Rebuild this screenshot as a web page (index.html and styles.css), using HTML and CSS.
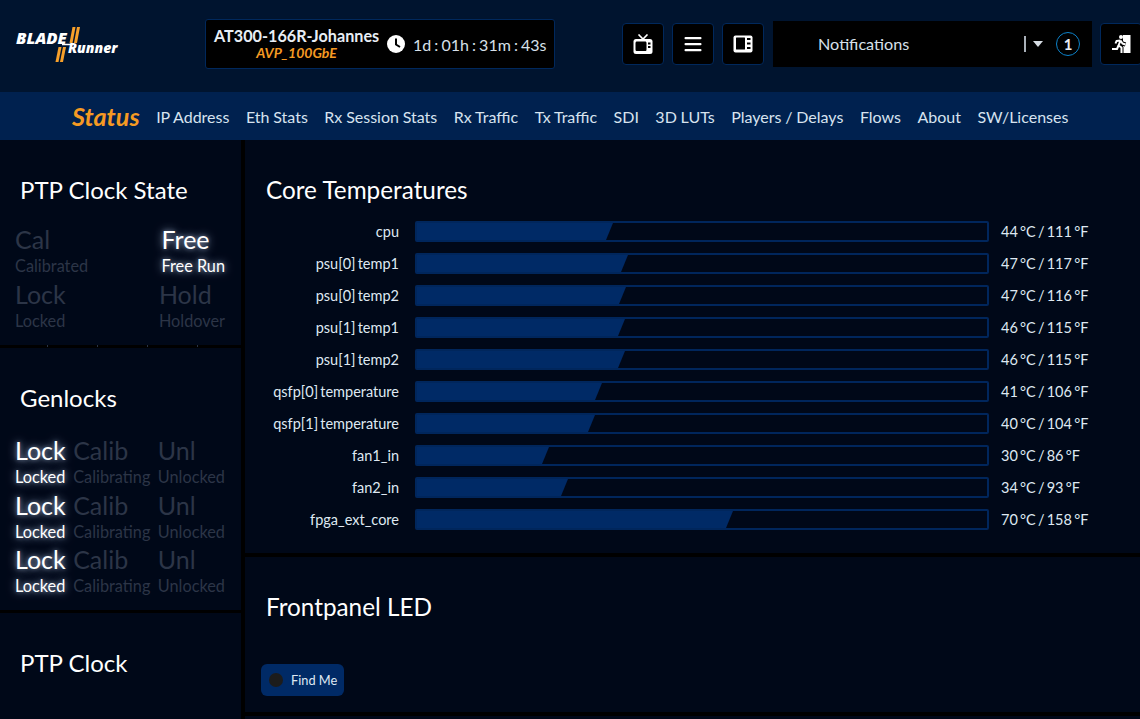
FILE: index.html
```html
<!DOCTYPE html>
<html lang="en">
<head>
<meta charset="utf-8">
<title>BladeRunner Status</title>
<link rel="stylesheet" href="styles.css">
</head>
<body>
<div class="page">
  <header class="top">
    <svg class="logo" width="104" height="40" viewBox="0 0 104 40">
      <text class="logo-blade" x="1" y="20">BLADE</text>
      <path class="logo-bar" d="M47 20.500h9"/>
      <g fill="#f7a02a">
        <polygon points="57.500,3 60.500,3 57.500,19 54.500,19"/>
        <polygon points="62,3 65,3 62,19 59,19"/>
        <polygon points="43.500,23 46.500,23 43.500,38 40.500,38"/>
        <polygon points="48,23 51,23 48,38 45,38"/>
      </g>
      <text class="logo-runner" x="53" y="29">Runner</text>
    </svg>
    <div class="device">
      <div class="device-name">
        <div class="device-title">AT300-166R-Johannes</div>
        <div class="device-sub">AVP_100GbE</div>
      </div>
      <svg class="clock" width="18" height="18" viewBox="0 0 18 18">
        <circle cx="9" cy="9" r="9" fill="#fff"/>
        <path d="M9 3.500v6l4 2.500" fill="none" stroke="#000" stroke-width="2"/>
      </svg>
      <div class="uptime">1d : 01h : 31m : 43s</div>
    </div>
    <button class="icon-btn first" aria-label="Monitor">
      <svg width="20" height="20" viewBox="0 0 20 20">
        <rect x="0.500" y="5" width="19" height="15" rx="2.500" fill="#fff"/>
        <path d="M5.500 0.500L10 5l4.500-4.500" fill="none" stroke="#fff" stroke-width="1.600"/>
        <path d="M4 7.500h8c1 0 1.500.6 1.500 1.500v6.500c0 1-.5 1.500-1.500 1.500H4c-1 0-1.500-.5-1.500-1.500V9c0-.9.500-1.500 1.500-1.500z" fill="#000"/>
        <rect x="15" y="8.500" width="2.500" height="2" fill="#000"/>
        <rect x="15" y="12" width="2.500" height="2" fill="#000"/>
      </svg>
    </button>
    <button class="icon-btn" aria-label="Menu">
      <svg width="18" height="16" viewBox="0 0 18 16" fill="#fff">
        <rect x="0.500" y="1" width="17" height="2.200" rx="1"/>
        <rect x="0.500" y="7" width="17" height="2.200" rx="1"/>
        <rect x="0.500" y="13" width="17" height="2.200" rx="1"/>
      </svg>
    </button>
    <button class="icon-btn" aria-label="Panel">
      <svg width="20" height="18" viewBox="0 0 20 18">
        <rect x="0.500" y="0.500" width="19" height="17" rx="2" fill="#fff"/>
        <rect x="3" y="2.500" width="9" height="12" rx="0.500" fill="#000"/>
        <rect x="14" y="3" width="3.500" height="2" fill="#000"/>
        <rect x="14" y="7.500" width="3.500" height="2" fill="#000"/>
        <rect x="14" y="12" width="3.500" height="2" fill="#000"/>
      </svg>
    </button>
    <div class="notify">
      <span class="notify-label">Notifications</span>
      <span class="notify-sep"></span>
      <span class="notify-caret"></span>
      <span class="notify-count">1</span>
    </div>
    <button class="icon-btn exit" aria-label="Exit">
      <svg width="20" height="20" viewBox="0 0 20 20">
        <rect x="12" y="1" width="7.500" height="18" fill="#fff"/>
        <g fill="none" stroke-linejoin="round">
          <path d="M9.500 6.500L7.500 11.500M9.500 6.500L5.500 7 4.500 9.500M9.500 6.500L11.500 9.500 14.500 10.500M7.500 11.500L10.500 13.500 10.500 19M7.500 11.500L6 15 1 15" stroke="#000" stroke-width="4"/>
          <path d="M9.500 6.500L7.500 11.500M9.500 6.500L5.500 7 4.500 9.500M9.500 6.500L11.500 9.500 14.500 10.500M7.500 11.500L10.500 13.500 10.500 19M7.500 11.500L6 15 1 15" stroke="#fff" stroke-width="2"/>
        </g>
        <circle cx="10" cy="3" r="2" fill="#fff"/>
      </svg>
    </button>
  </header>

  <nav class="tabs">
    <a class="tab active">Status</a>
    <a class="tab">IP Address</a>
    <a class="tab">Eth Stats</a>
    <a class="tab">Rx Session Stats</a>
    <a class="tab">Rx Traffic</a>
    <a class="tab">Tx Traffic</a>
    <a class="tab">SDI</a>
    <a class="tab">3D LUTs</a>
    <a class="tab">Players / Delays</a>
    <a class="tab">Flows</a>
    <a class="tab">About</a>
    <a class="tab">SW/Licenses</a>
  </nav>

  <main class="content">
    <aside class="left">
      <section class="panel ptp-state">
        <h2 class="title side-title">PTP Clock State</h2>
        <div class="state-row">
          <div class="state"><div class="big">Cal</div><div class="small">Calibrated</div></div>
          <div class="state on"><div class="big">Free</div><div class="small">Free Run</div></div>
        </div>
        <div class="state-row">
          <div class="state"><div class="big">Lock</div><div class="small">Locked</div></div>
          <div class="state"><div class="big">Hold</div><div class="small">Holdover</div></div>
        </div>
      </section>
      <div class="gap-ticks"><i></i><i></i><i></i><i></i></div>
      <section class="panel genlocks">
        <h2 class="title side-title">Genlocks</h2>
        <div class="state-row">
          <div class="state on"><div class="big">Lock</div><div class="small">Locked</div></div>
          <div class="state"><div class="big">Calib</div><div class="small">Calibrating</div></div>
          <div class="state"><div class="big">Unl</div><div class="small">Unlocked</div></div>
        </div>
        <div class="state-row">
          <div class="state on"><div class="big">Lock</div><div class="small">Locked</div></div>
          <div class="state"><div class="big">Calib</div><div class="small">Calibrating</div></div>
          <div class="state"><div class="big">Unl</div><div class="small">Unlocked</div></div>
        </div>
        <div class="state-row">
          <div class="state on"><div class="big">Lock</div><div class="small">Locked</div></div>
          <div class="state"><div class="big">Calib</div><div class="small">Calibrating</div></div>
          <div class="state"><div class="big">Unl</div><div class="small">Unlocked</div></div>
        </div>
      </section>
      <section class="panel ptp-clock">
        <h2 class="title side-title">PTP Clock</h2>
      </section>
    </aside>

    <div class="right">
      <section class="panel temps">
        <h2 class="title main-title">Core Temperatures</h2>
        <div class="temp-row"><span class="temp-label">cpu</span><span class="bar"><span class="fill" style="width:196px"></span></span><span class="temp-val">44 °C / 111 °F</span></div>
        <div class="temp-row"><span class="temp-label">psu[0] temp1</span><span class="bar"><span class="fill" style="width:211px"></span></span><span class="temp-val">47 °C / 117 °F</span></div>
        <div class="temp-row"><span class="temp-label">psu[0] temp2</span><span class="bar"><span class="fill" style="width:209px"></span></span><span class="temp-val">47 °C / 116 °F</span></div>
        <div class="temp-row"><span class="temp-label">psu[1] temp1</span><span class="bar"><span class="fill" style="width:208px"></span></span><span class="temp-val">46 °C / 115 °F</span></div>
        <div class="temp-row"><span class="temp-label">psu[1] temp2</span><span class="bar"><span class="fill" style="width:208px"></span></span><span class="temp-val">46 °C / 115 °F</span></div>
        <div class="temp-row"><span class="temp-label">qsfp[0] temperature</span><span class="bar"><span class="fill" style="width:185px"></span></span><span class="temp-val">41 °C / 106 °F</span></div>
        <div class="temp-row"><span class="temp-label">qsfp[1] temperature</span><span class="bar"><span class="fill" style="width:178px"></span></span><span class="temp-val">40 °C / 104 °F</span></div>
        <div class="temp-row"><span class="temp-label">fan1_in</span><span class="bar"><span class="fill" style="width:132px"></span></span><span class="temp-val">30 °C / 86 °F</span></div>
        <div class="temp-row"><span class="temp-label">fan2_in</span><span class="bar"><span class="fill" style="width:151px"></span></span><span class="temp-val">34 °C / 93 °F</span></div>
        <div class="temp-row"><span class="temp-label">fpga_ext_core</span><span class="bar"><span class="fill" style="width:316px"></span></span><span class="temp-val">70 °C / 158 °F</span></div>
      </section>
      <section class="panel led">
        <h2 class="title main-title">Frontpanel LED</h2>
        <button class="find"><span class="led-dot"></span>Find Me</button>
      </section>
      <section class="panel rest"></section>
    </div>
  </main>
</div>
</body>
</html>
```
FILE: styles.css
```css
* { box-sizing: border-box; }
html, body { margin: 0; padding: 0; height: 100%; background: #000; overflow: hidden; }
body { font-family: Lato, "Liberation Sans", sans-serif; color: #dfe8f2; }
.page { width: 1140px; height: 719px; display: flex; flex-direction: column; overflow: hidden; }

.top { height: 92px; flex: none; display: flex; align-items: center; background: #00142f; padding: 0 0 4px 15px; overflow: hidden; }
.logo { flex: none; margin-right: 86px; overflow: visible; }
.logo-blade { font: italic 800 16.500px "Open Sans", sans-serif; fill: #fff; }
.logo-runner { font: italic 800 14px "Open Sans", sans-serif; fill: #fff; }
.logo-bar { fill: none; stroke: #fff; stroke-width: 1.500; }

.device { width: 350px; height: 50px; flex: none; display: flex; align-items: center; background: #000; border: 1px solid #00285c; border-radius: 3px; padding-left: 8px; margin-right: 67px; }
.device-name { width: 165px; text-align: center; flex: none; }
.device-title { font-size: 16.200px; font-weight: 700; line-height: 17px; color: #e8eef5; white-space: nowrap; }
.device-sub { font-size: 14px; font-weight: 700; font-style: italic; line-height: 17px; color: #f59a23; }
.clock { margin-left: 8px; flex: none; }
.uptime { margin-left: 8px; font-size: 16px; word-spacing: -1px; color: #d7e0ea; white-space: nowrap; }

.icon-btn { width: 42px; height: 42px; flex: none; padding: 0; display: flex; align-items: center; justify-content: center; background: #000; border: 1px solid #00285c; border-radius: 4px; margin-right: 8px; }
.icon-btn.exit { margin: 0 0 0 8px; }

.notify { width: 319px; height: 46px; flex: none; display: flex; align-items: center; background: #000; margin-left: 1px; padding-left: 45px; }
.notify-label { width: 206px; padding-bottom: 2px; font-size: 16.200px; color: #d7e0ea; }
.notify-sep { width: 2px; height: 16px; background: #a9b0b8; }
.notify-caret { width: 0; height: 0; margin-left: 7px; border-left: 5.500px solid transparent; border-right: 5.500px solid transparent; border-top: 6px solid #d7dde4; }
.notify-count { width: 24px; height: 24px; margin-left: 13px; border: 1.500px solid #0d82c9; border-radius: 50%; display: flex; align-items: center; justify-content: center; font-size: 15px; font-weight: 700; color: #e8eef5; }

.tabs { height: 48px; flex: none; display: flex; align-items: center; gap: 16.500px; background: #00214f; padding-left: 72px; }
.tab { font-size: 16px; word-spacing: -0.300px; color: #d7e3ef; white-space: nowrap; }
.tab.active { font-size: 25.200px; font-weight: 700; font-style: italic; color: #f59a23; }

.content { flex: 1; min-height: 0; display: flex; gap: 4px; background: #000; }
.left { width: 241px; flex: none; display: flex; flex-direction: column; }
.right { flex: 1; min-width: 0; display: flex; flex-direction: column; gap: 4px; }
.panel { background: #000818; }

.title { margin: 0; font-weight: 400; color: #fff; line-height: 28px; }
.side-title { font-size: 24px; padding-left: 20px; }
.main-title { font-size: 24.300px; padding-left: 21px; }

.ptp-state { height: 205px; padding-top: 36px; }
.ptp-state .state-row { height: 55px; }
.ptp-state .side-title { margin-bottom: 20px; }
.gap-ticks { height: 3px; flex: none; display: flex; gap: 49px; padding-left: 47px; background: #000; }
.gap-ticks i { width: 1px; height: 2px; background: #2a3344; }
.genlocks { height: 262px; margin-bottom: 3px; padding-top: 36px; }
.genlocks .side-title { margin-bottom: 23px; }
.genlocks .state-row { height: 54.500px; }
.ptp-clock { flex: 1; padding-top: 36px; }

.state-row { display: flex; justify-content: space-between; padding: 0 16px 0 15px; }
.state { color: #2c3547; }
.big { font-size: 25px; line-height: 30px; }
.small { font-size: 16.300px; line-height: 22px; padding-top: 1px; white-space: nowrap; }
.state.on { color: #fff; text-shadow: 0 0 10px rgba(200, 220, 255, .75), 0 0 4px rgba(200, 220, 255, .4); }

.temps { height: 413px; padding-top: 36px; }
.temps .main-title { margin-bottom: 17px; }
.temp-row { height: 32px; display: flex; align-items: flex-start; }
.temp-label { width: 154px; text-align: right; font-size: 14.500px; word-spacing: -1.500px; line-height: 21px; color: #dfe8f2; white-space: nowrap; }
.bar { width: 574px; height: 21px; margin-left: 16px; flex: none; border: 2px solid #00265c; border-radius: 2px; }
.fill { display: block; height: 100%; background: #002a66; clip-path: polygon(0 0, 100% 0, calc(100% - 7px) 100%, 0 100%); }
.temp-val { margin-left: 12px; font-size: 14.500px; word-spacing: -1.500px; line-height: 21px; color: #dfe8f2; white-space: nowrap; }

.led { height: 155px; padding-top: 36px; }
.find { display: flex; align-items: center; height: 32px; width: 83px; margin: 43px 0 0 16px; padding: 0 0 0 8px; background: #002a66; border: 0; border-radius: 6px; color: #dfe8f2; font: 12.800px Lato, sans-serif; }
.led-dot { width: 14px; height: 14px; border-radius: 50%; background: #1c1c1c; margin-right: 8px; flex: none; }
.rest { flex: 1; }
```
